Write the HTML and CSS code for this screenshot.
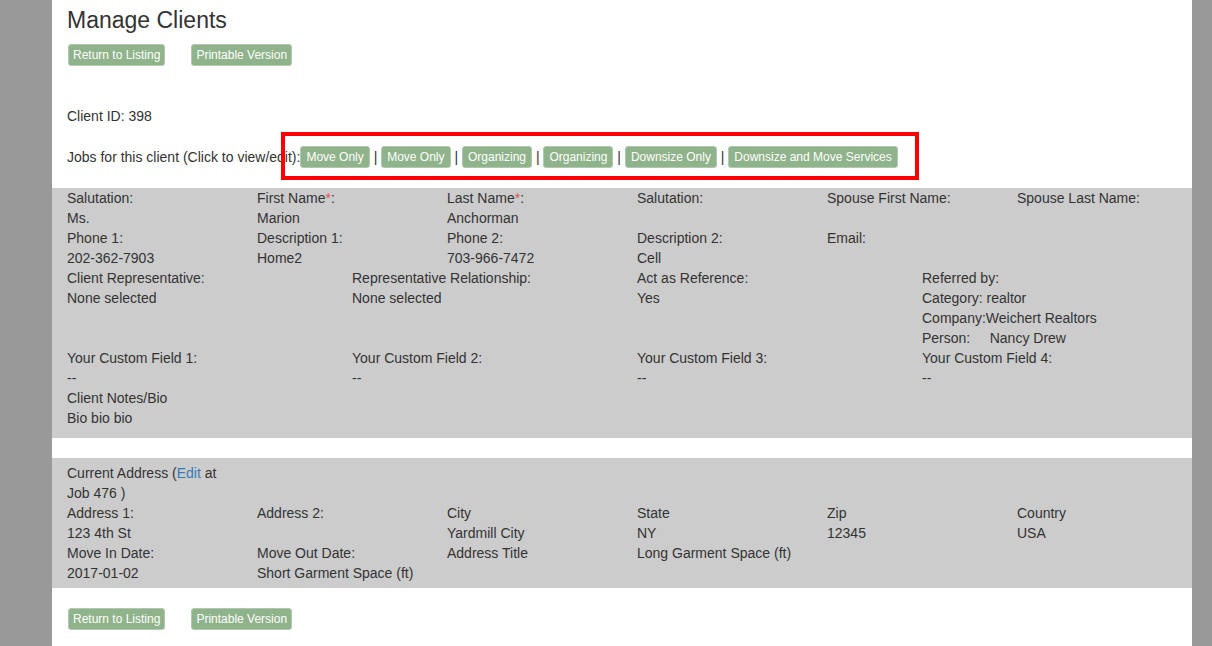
FILE: index.html
```html
<!DOCTYPE html>
<html>
<head>
<meta charset="utf-8">
<link rel="stylesheet" href="styles.css">
</head>
<body>
<div class="page">
  <h1 class="title">Manage Clients</h1>
  <div class="actions">
    <span class="btn">Return to Listing</span>
    <span class="btn">Printable Version</span>
  </div>
  <p class="client-id">Client ID: 398</p>
  <div class="jobs-wrap">
    <p class="jobs">Jobs for this client (Click to view/edit):<span class="btn job">Move Only</span> | <span class="btn job">Move Only</span> | <span class="btn job">Organizing</span> | <span class="btn job">Organizing</span> | <span class="btn job">Downsize Only</span> | <span class="btn job">Downsize and Move Services</span></p>
    <div class="highlight"></div>
  </div>

  <section class="panel panel-client">
    <div class="row six">
      <div class="cell"><div>Salutation:</div><div>Ms.</div></div>
      <div class="cell"><div>First Name<span class="req">*</span>:</div><div>Marion</div></div>
      <div class="cell"><div>Last Name<span class="req">*</span>:</div><div>Anchorman</div></div>
      <div class="cell"><div>Salutation:</div><div>&nbsp;</div></div>
      <div class="cell"><div>Spouse First Name:</div><div>&nbsp;</div></div>
      <div class="cell"><div>Spouse Last Name:</div><div>&nbsp;</div></div>
    </div>
    <div class="row six">
      <div class="cell"><div>Phone 1:</div><div>202-362-7903</div></div>
      <div class="cell"><div>Description 1:</div><div>Home2</div></div>
      <div class="cell"><div>Phone 2:</div><div>703-966-7472</div></div>
      <div class="cell"><div>Description 2:</div><div>Cell</div></div>
      <div class="cell"><div>Email:</div><div>&nbsp;</div></div>
      <div class="cell"></div>
    </div>
    <div class="row four">
      <div class="cell"><div>Client Representative:</div><div>None selected</div></div>
      <div class="cell"><div>Representative Relationship:</div><div>None selected</div></div>
      <div class="cell"><div>Act as Reference:</div><div>Yes</div></div>
      <div class="cell"><div>Referred by:</div><div>Category: realtor</div><div>Company:Weichert Realtors</div><div>Person:&nbsp;&nbsp;&nbsp;&nbsp; Nancy Drew</div></div>
    </div>
    <div class="row four">
      <div class="cell"><div>Your Custom Field 1:</div><div>--</div></div>
      <div class="cell"><div>Your Custom Field 2:</div><div>--</div></div>
      <div class="cell"><div>Your Custom Field 3:</div><div>--</div></div>
      <div class="cell"><div>Your Custom Field 4:</div><div>--</div></div>
    </div>
    <div class="row one">
      <div class="cell"><div>Client Notes/Bio</div><div>Bio bio bio</div></div>
    </div>
  </section>

  <section class="panel panel-address">
    <div class="row six">
      <div class="cell">Current Address (<a class="link" href="#">Edit</a> at Job 476 )</div>
    </div>
    <div class="row six">
      <div class="cell"><div>Address 1:</div><div>123 4th St</div></div>
      <div class="cell"><div>Address 2:</div><div>&nbsp;</div></div>
      <div class="cell"><div>City</div><div>Yardmill City</div></div>
      <div class="cell"><div>State</div><div>NY</div></div>
      <div class="cell"><div>Zip</div><div>12345</div></div>
      <div class="cell"><div>Country</div><div>USA</div></div>
    </div>
    <div class="row six">
      <div class="cell"><div>Move In Date:</div><div>2017-01-02</div></div>
      <div class="cell"><div>Move Out Date:</div><div>Short Garment Space (ft)</div></div>
      <div class="cell"><div>Address Title</div></div>
      <div class="cell"><div>Long Garment Space (ft)</div></div>
    </div>
  </section>

  <div class="actions bottom">
    <span class="btn">Return to Listing</span>
    <span class="btn">Printable Version</span>
  </div>
</div>
</body>
</html>
```

FILE: styles.css
```css
html, body {
  margin: 0;
  padding: 0;
  height: 100%;
}
body {
  background: #999999;
  font-family: "Liberation Sans", Arial, sans-serif;
  font-size: 14px;
  line-height: 20px;
  color: #333333;
}
.page {
  background: #ffffff;
  width: 1140px;
  margin-left: 52px;
  min-height: 100%;
  padding-top: 8px;
  box-sizing: border-box;
}
.title {
  margin: 0 15px;
  font-size: 23px;
  font-weight: normal;
  line-height: 25px;
  color: #333333;
}
.actions {
  display: flex;
  gap: 26px;
  margin: 11px 15px 0 16px;
}
.btn {
  display: inline-block;
  background: #8fb38a;
  color: #ffffff;
  font-size: 12px;
  line-height: 20px;
  padding: 0 4px;
  border: 1px solid #b3c7b0;
  border-radius: 3px;
}
.client-id {
  margin: 40px 15px 0;
}
.jobs-wrap {
  position: relative;
  margin: 20px 15px 0;
  height: 22px;
}
.jobs {
  margin: 0;
  line-height: 22px;
  white-space: nowrap;
}
.btn.job {
  vertical-align: top;
  line-height: 20px;
  padding: 0 5px;
}
.highlight {
  position: absolute;
  left: 214px;
  top: -14px;
  width: 630px;
  height: 40px;
  border: 4px solid #ff0000;
}
.panel {
  background: #cccccc;
  margin-top: 20px;
}
.panel-client {
  padding-bottom: 10px;
}
.panel-address {
  padding: 5px 0;
}
.row {
  display: grid;
}
.row.six {
  grid-template-columns: repeat(6, 190px);
}
.row.four {
  grid-template-columns: repeat(4, 285px);
}
.row.one {
  grid-template-columns: 1fr;
}
.cell {
  padding: 0 15px;
  min-height: 20px;
}
.req {
  color: #d9534f;
}
.link {
  color: #337ab7;
  text-decoration: none;
}
.actions.bottom {
  margin-top: 20px;
  padding-bottom: 20px;
}
```
